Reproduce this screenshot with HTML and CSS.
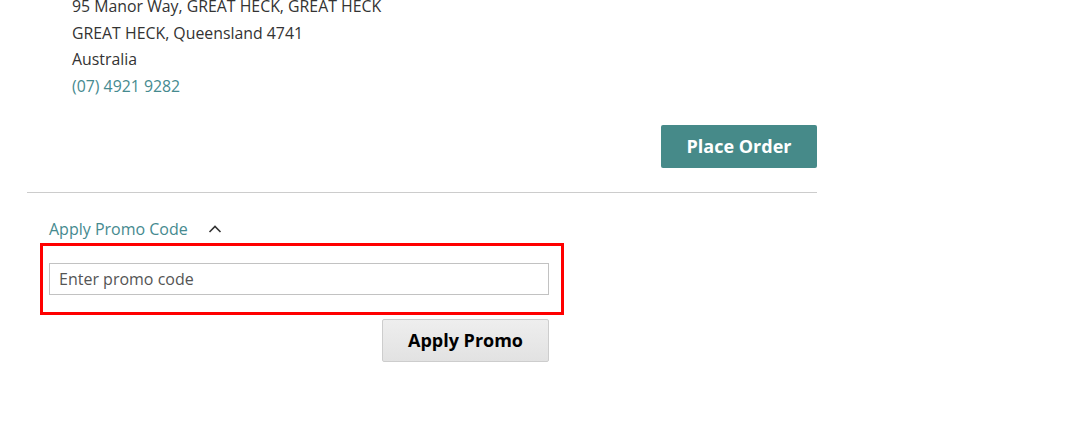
FILE: index.html
```html
<!DOCTYPE html>
<html>
<head>
  <meta charset="UTF-8">
  <link rel="stylesheet" href="styles.css">
</head>
<body>
  <div class="checkout">
    <!-- Shipping address -->
    <div class="address">
      <div>95 Manor Way, GREAT HECK, GREAT HECK</div>
      <div>GREAT HECK, Queensland 4741</div>
      <div>Australia</div>
      <div class="phone">(07) 4921 9282</div>
    </div>

    <div class="actions">
      <button class="btn-primary">Place Order</button>
    </div>

    <!-- Promo code -->
    <div class="promo">
      <div class="promo-toggle">
        <span>Apply Promo Code</span>
        <svg class="chevron" width="14" height="10" viewBox="0 0 14 10">
          <path d="M1.5 8 L7 2.5 L12.5 8" fill="none" stroke="#333" stroke-width="1.6"/>
        </svg>
      </div>
      <div class="promo-form">
        <div class="promo-field">
          <input type="text" class="promo-input" placeholder="Enter promo code">
          <div class="highlight"></div>
        </div>
        <div class="promo-actions">
          <button class="btn-secondary">Apply Promo</button>
        </div>
      </div>
    </div>
  </div>
</body>
</html>
```

FILE: styles.css
```css
body { margin: 0; background: #fff; font-family: "Open Sans", "Liberation Sans", sans-serif; color: #333; }

.checkout { width: 790px; margin-left: 27px; margin-top: -7px; }

.address { padding-left: 45px; font-size: 15.85px; line-height: 26.7px; color: #333; }
.address .phone { color: #468a8f; }

.actions { display: flex; justify-content: flex-end; margin-top: 25px; padding-bottom: 24px; border-bottom: 1px solid #ccc; }
.btn-primary { width: 156px; height: 43px; border: none; border-radius: 2px; background: #468a89; color: #fff; font-family: inherit; font-size: 18px; font-weight: bold; cursor: pointer; }

.promo { padding-left: 22px; padding-top: 23px; }
.promo-toggle { display: flex; align-items: center; height: 26px; font-size: 16px; color: #468a8f; }
.promo-toggle .chevron { margin-left: 20px; margin-top: 1px; }

.promo-form { width: 500px; margin-top: 21px; }
.promo-field { position: relative; }
.promo-input { display: block; box-sizing: border-box; width: 500px; height: 32px; border: 1px solid #c2c2c2; padding: 0 9px; font-family: inherit; font-size: 16px; color: #333; outline: none; }
.promo-input::placeholder { color: #555; }
.highlight { position: absolute; left: -9px; right: -15px; top: -20px; bottom: -20px; border: 3px solid #f00; pointer-events: none; }

.promo-actions { display: flex; justify-content: flex-end; margin-top: 24px; }
.btn-secondary { width: 167px; height: 43px; border: 1px solid #cdcdcd; border-radius: 2px; background: linear-gradient(#eee, #e2e2e2); color: #000; font-family: inherit; font-size: 18px; font-weight: bold; cursor: pointer; }
```
